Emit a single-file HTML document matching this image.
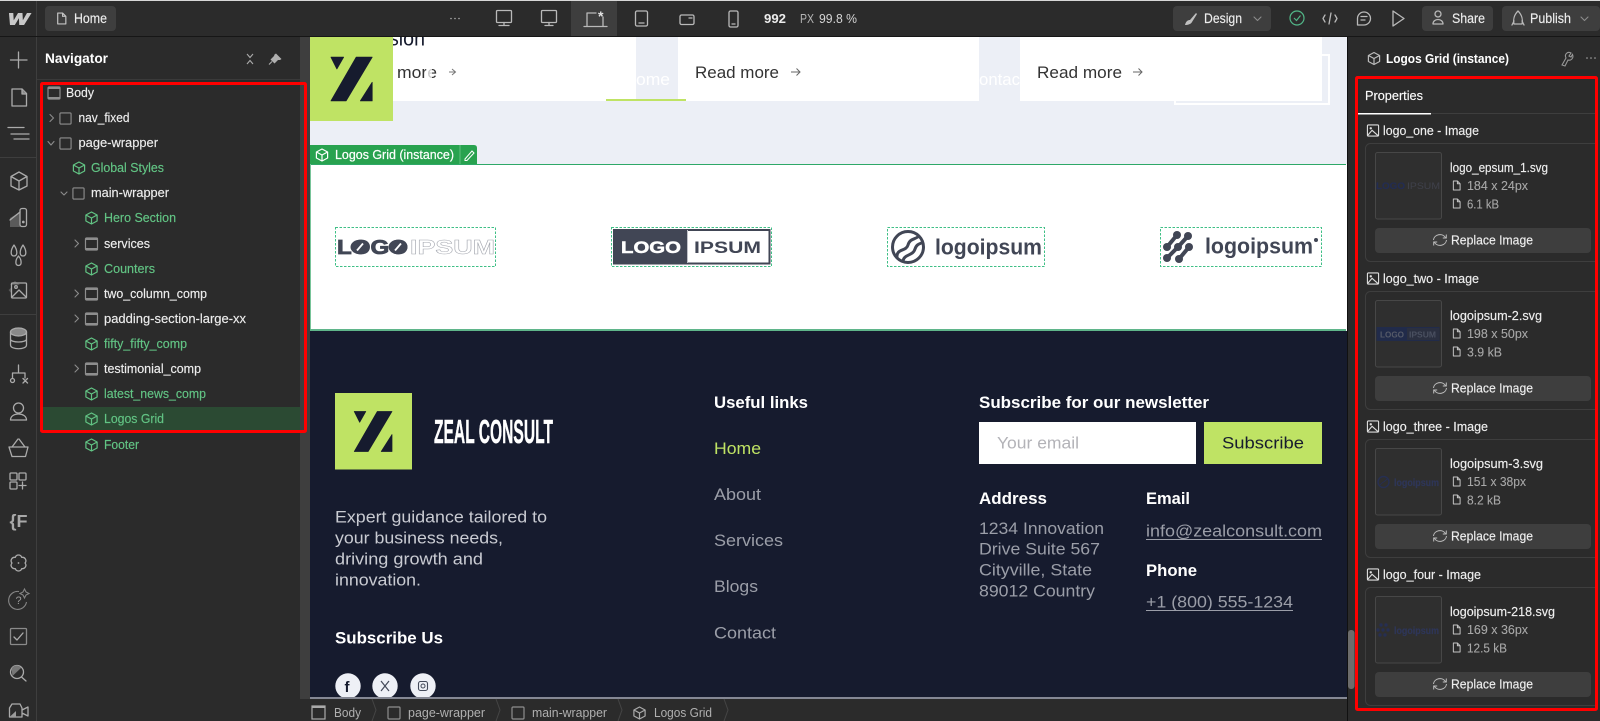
<!DOCTYPE html>
<html lang="en"><head><meta charset="utf-8"><title>Logos Grid</title>
<style>
html,body{margin:0;padding:0;width:1600px;height:721px;overflow:hidden;background:#2b2b2b}
svg{display:block;font-family:"Liberation Sans",sans-serif}
.n{font-size:12.5px;fill:#ededed;stroke:#ededed;stroke-width:.15px}
.g{font-size:12.5px;fill:#62c484;stroke:#62c484;stroke-width:.15px}
.i{fill:none;stroke:#b9b9b9;stroke-width:1.3;stroke-linejoin:round;stroke-linecap:round}
.ch{fill:none;stroke:#8c8c8c;stroke-width:1.1;stroke-linejoin:round;stroke-linecap:round}
.t{font-size:13.5px;fill:#ececec;stroke:#ececec;stroke-width:.15px}
.p{font-size:12.5px;fill:#eee;stroke:#eee;stroke-width:.15px}
.s{font-size:12.5px;fill:#a8a8a8;stroke:#a8a8a8;stroke-width:.1px}
.f{font-size:16.8px;fill:#c9cbd2}
.l{font-size:16.8px;fill:#9b9ea8}
.b{font-size:16.6px;fill:#fff;font-weight:bold}
.c{font-size:12.5px;fill:#b0b0b0}
</style></head><body>
<svg width="1600" height="721" viewBox="0 0 1600 721" xmlns="http://www.w3.org/2000/svg">
<defs>
<symbol id="cube" viewBox="0 0 14 14"><path d="M7 1 L12.6 4 V10 L7 13 L1.4 10 V4Z M1.4 4 L7 7 L12.6 4 M7 7 V13" fill="none" stroke="currentColor" stroke-width="1.2" stroke-linejoin="round"/></symbol>
<symbol id="box" viewBox="0 0 14 14"><rect x="1" y="1" width="12" height="12" rx="1" fill="none" stroke="#8e8e8e" stroke-width="1.2"/></symbol>
<symbol id="sec" viewBox="0 0 14 14"><rect x="1" y="1" width="12" height="12" rx="1" fill="none" stroke="#8e8e8e" stroke-width="1.2"/><rect x="1" y="1" width="12" height="2" fill="#8e8e8e"/><rect x="1" y="11" width="12" height="2" fill="#8e8e8e"/></symbol>
<symbol id="img" viewBox="0 0 14 14"><rect x="1" y="1" width="12" height="12" rx="1" fill="none" stroke="#ddd" stroke-width="1.2"/><circle cx="4.6" cy="4.6" r="1.3" fill="#ddd"/><path d="M1.5 12 L6 6.8 L12.5 12.6" fill="none" stroke="#ddd" stroke-width="1.2"/></symbol>
<symbol id="doc" viewBox="0 0 10 12"><path d="M1.5 1 H6 L9 4 V11 H1.5Z M6 1 V4 H9" fill="none" stroke="#c4c4c4" stroke-width="1.1" stroke-linejoin="round"/></symbol>
<symbol id="z" viewBox="0 0 100 100"><path d="M25 24 H40 L32 38Z M55 24 H74 L43 76 H25Z M74 54 V76 H60Z" fill="#161b2e" stroke="#161b2e" stroke-width="1" stroke-linejoin="round"/></symbol>
<symbol id="rep" viewBox="0 0 16 14"><path d="M1.5 7 A6.500 6 0 0 1 13.500 4.500 M14.500 7 A6.500 6 0 0 1 2.500 9.500 M14.300 1.500 V5 H10.800 M1.700 12.500 V9 H5.200" fill="none" stroke="#bdbdbd" stroke-width="1"/></symbol>
</defs>

<!-- canvas -->
<rect x="310" y="37" width="1037" height="128" fill="#eceff6"/>
<rect x="393" y="37" width="243" height="64" fill="#fff"/>
<rect x="678" y="37" width="301" height="64" fill="#fff"/>
<rect x="1020" y="37" width="302" height="64" fill="#fff"/>
<rect x="1175" y="55" width="154" height="49" fill="none" stroke="#fff" stroke-width="2"/>
<rect x="1020" y="37" width="302" height="64" fill="#fff"/>
<text x="389" y="45.500" font-size="21" fill="#161b2e" textLength="36" lengthAdjust="spacingAndGlyphs">sion</text>
<text x="397" y="78" font-size="16.500" fill="#333" textLength="40" lengthAdjust="spacingAndGlyphs">more</text>
<rect x="426" y="66" width="6" height="14" fill="#fff" opacity=".75"/>
<path d="M449 72 H455 M452 69 L455.500 72 L452 75" fill="none" stroke="#777" stroke-width="1"/>
<text x="636" y="85" font-size="16.500" fill="#fff" textLength="34" lengthAdjust="spacingAndGlyphs">ome</text>
<rect x="606" y="99" width="80" height="2" fill="#bfe364"/>
<text x="695" y="78" font-size="16.500" fill="#333" textLength="84" lengthAdjust="spacingAndGlyphs">Read more</text>
<path d="M791 72 H800 M796.500 68.500 L800 72 L796.500 75.500" fill="none" stroke="#666" stroke-width="1"/>
<text x="979" y="85" font-size="16.500" fill="#fff" textLength="41" lengthAdjust="spacingAndGlyphs">ontac</text>
<text x="1037" y="78" font-size="16.500" fill="#333" textLength="85" lengthAdjust="spacingAndGlyphs">Read more</text>
<path d="M1133 72 H1142 M1138.500 68.500 L1142 72 L1138.500 75.500" fill="none" stroke="#666" stroke-width="1"/>
<rect x="310" y="37" width="83" height="84" fill="#bfe364"/>
<use href="#z" x="310" y="37" width="84" height="84"/>

<!-- logos section -->
<rect x="310" y="164" width="1037" height="167" fill="#fff"/>
<rect x="310" y="164" width="1036" height="1" fill="#2ea868"/>
<rect x="310" y="164" width="1" height="167" fill="#78c499"/>
<rect x="310" y="329" width="1036" height="2" fill="#5fb58a"/>
<path d="M310 145 H474 Q477 145 477 148 V164 H310Z" fill="#28a24f"/>
<use href="#cube" x="315" y="148" width="14" height="14" color="#fff"/>
<text x="335" y="159" font-size="12.500" fill="#fff" stroke="#fff" stroke-width=".2" textLength="119" lengthAdjust="spacingAndGlyphs">Logos Grid (instance)</text>
<rect x="459.500" y="145" width="1" height="19" fill="#5fc07f"/>
<path d="M465 159 L472 151 L474 153 L467 160.500 L465 160.500Z" fill="none" stroke="#fff" stroke-width="1"/>

<g fill="none" stroke="#3fbf86" stroke-width="1" stroke-dasharray="2.500 1.500">
<rect x="335.500" y="227.500" width="160" height="39"/>
<rect x="611.500" y="227.500" width="160" height="39"/>
<rect x="887.500" y="227.500" width="157" height="39"/>
<rect x="1160.500" y="227.500" width="161" height="39"/>
</g>
<!-- logo 1 -->
<text x="337" y="254" font-size="20" font-weight="bold" fill="#414655" stroke="#414655" stroke-width=".8" textLength="71" lengthAdjust="spacingAndGlyphs">LOGO</text>
<ellipse cx="360" cy="247" rx="9.500" ry="7.300" fill="#414655"/><path d="M357 250.500 L363 243.500" stroke="#fff" stroke-width="1.800"/>
<ellipse cx="398" cy="247" rx="9.500" ry="7.300" fill="#414655"/><path d="M395 250.500 L401 243.500" stroke="#fff" stroke-width="1.800"/>
<text x="410" y="254" font-size="20" font-weight="bold" fill="#fff" stroke="#a5a8b0" stroke-width=".5" textLength="85" lengthAdjust="spacingAndGlyphs">IPSUM</text>
<!-- logo 2 -->
<rect x="614" y="230" width="155.500" height="33.500" fill="#fff" stroke="#414655" stroke-width="2"/>
<rect x="614" y="230" width="73" height="33.500" fill="#414655"/>
<rect x="687" y="230" width="1" height="33" fill="#bfc1c8"/>
<text x="621" y="253" font-size="17" font-weight="bold" fill="#fff" stroke="#fff" stroke-width=".5" textLength="60" lengthAdjust="spacingAndGlyphs">LOGO</text>
<text x="694" y="253" font-size="17" font-weight="bold" fill="#414655" textLength="67" lengthAdjust="spacingAndGlyphs">IPSUM</text>
<!-- logo 3 -->
<circle cx="908" cy="247" r="15.500" fill="none" stroke="#414655" stroke-width="3"/>
<path d="M897 258 C896 248 906 252 908 245 C910 238 915 240 919 236 M903 261 C904 254 913 256 915 249 C917 243 921 244 923 242" fill="none" stroke="#414655" stroke-width="3"/>
<text x="935" y="254.500" font-size="22" font-weight="bold" fill="#414655" textLength="107" lengthAdjust="spacingAndGlyphs">logoipsum</text>
<!-- logo 4 -->
<g fill="none" stroke="#414655" stroke-width="4" stroke-linecap="round"><path d="M1177 235 L1167 247 M1188 236 L1178 247 L1167 258 M1189 247 L1179 259"/></g>
<g fill="#414655"><circle cx="1177" cy="235" r="4"/><circle cx="1188" cy="236" r="4"/><circle cx="1167" cy="247" r="4"/><circle cx="1178" cy="247" r="4"/><circle cx="1189" cy="247" r="4"/><circle cx="1167" cy="258" r="4"/><circle cx="1179" cy="259" r="4"/></g>
<text x="1205" y="253.500" font-size="22" font-weight="bold" fill="#414655" textLength="108" lengthAdjust="spacingAndGlyphs">logoipsum</text>
<circle cx="1316" cy="240" r="2" fill="#414655"/>

<!-- footer -->
<rect x="310" y="331" width="1037" height="366" fill="#161b2e"/>
<rect x="335" y="393" width="77" height="76.500" fill="#bfe364"/>
<use href="#z" x="335" y="393" width="77" height="77"/>
<text x="434" y="443" font-size="33" font-weight="bold" fill="#fff" stroke="#fff" stroke-width=".4" textLength="119" lengthAdjust="spacingAndGlyphs">ZEAL CONSULT</text>
<text class="f" x="335" y="522.500" textLength="212" lengthAdjust="spacingAndGlyphs">Expert guidance tailored to</text>
<text class="f" x="335" y="543.500" textLength="168" lengthAdjust="spacingAndGlyphs">your business needs,</text>
<text class="f" x="335" y="564.500" textLength="148" lengthAdjust="spacingAndGlyphs">driving growth and</text>
<text class="f" x="335" y="585.500" textLength="86" lengthAdjust="spacingAndGlyphs">innovation.</text>
<text class="b" x="335" y="643.500" textLength="108" lengthAdjust="spacingAndGlyphs">Subscribe Us</text>
<circle cx="348" cy="686" r="12.700" fill="#eef0f6"/><circle cx="385" cy="686" r="12.700" fill="#eef0f6"/><circle cx="423" cy="686" r="12.700" fill="#eef0f6"/>
<text x="344.500" y="692" font-size="15" font-weight="bold" fill="#161b2e">f</text>
<path d="M381 681 L389 691 M389 681 L381 691" stroke="#444a5a" stroke-width="1.200" fill="none"/>
<rect x="418.500" y="681.500" width="9" height="9" rx="2" fill="none" stroke="#444a5a" stroke-width="1.100"/><circle cx="423" cy="686" r="2" fill="none" stroke="#444a5a"/>

<text class="b" x="714" y="408" textLength="94" lengthAdjust="spacingAndGlyphs">Useful links</text>
<text class="l" x="714" y="454" style="fill:#bfe364" textLength="47" lengthAdjust="spacingAndGlyphs">Home</text>
<text class="l" x="714" y="500" textLength="47" lengthAdjust="spacingAndGlyphs">About</text>
<text class="l" x="714" y="546" textLength="69" lengthAdjust="spacingAndGlyphs">Services</text>
<text class="l" x="714" y="592" textLength="44" lengthAdjust="spacingAndGlyphs">Blogs</text>
<text class="l" x="714" y="638.500" textLength="62" lengthAdjust="spacingAndGlyphs">Contact</text>

<text class="b" x="979" y="408" textLength="230" lengthAdjust="spacingAndGlyphs">Subscribe for our newsletter</text>
<rect x="979" y="422" width="217" height="42" fill="#fff"/>
<text x="997" y="448.500" font-size="16.800" fill="#b3b3b8" textLength="82" lengthAdjust="spacingAndGlyphs">Your email</text>
<rect x="1204" y="422" width="118" height="42" fill="#bfe364"/>
<text x="1222" y="448.500" font-size="16.800" fill="#161b2e" textLength="82" lengthAdjust="spacingAndGlyphs">Subscribe</text>
<text class="b" x="979" y="504" textLength="68" lengthAdjust="spacingAndGlyphs">Address</text>
<text class="b" x="1146" y="504" textLength="44" lengthAdjust="spacingAndGlyphs">Email</text>
<text class="l" x="979" y="534" textLength="125" lengthAdjust="spacingAndGlyphs">1234 Innovation</text>
<text class="l" x="979" y="554.500" textLength="121" lengthAdjust="spacingAndGlyphs">Drive Suite 567</text>
<text class="l" x="979" y="575.500" textLength="113" lengthAdjust="spacingAndGlyphs">Cityville, State</text>
<text class="l" x="979" y="596.500" textLength="116" lengthAdjust="spacingAndGlyphs">89012 Country</text>
<text class="l" x="1146" y="536.500" textLength="176" lengthAdjust="spacingAndGlyphs">info@zealconsult.com</text>
<rect x="1146" y="539" width="176" height="1" fill="#9b9ea8"/>
<text class="b" x="1146" y="576" textLength="51" lengthAdjust="spacingAndGlyphs">Phone</text>
<text class="l" x="1146" y="607.500" textLength="147" lengthAdjust="spacingAndGlyphs">+1 (800) 555-1234</text>
<rect x="1146" y="610" width="147" height="1" fill="#9b9ea8"/>
<rect x="310" y="697" width="1037" height="2" fill="#858894"/>

<!-- top bar -->
<rect x="0" y="0" width="1600" height="37" fill="#2b2b2b"/>
<rect x="0" y="0" width="1600" height="1" fill="#d8d8d8"/>
<rect x="0" y="36" width="1600" height="1" fill="#161616"/>
<rect x="36" y="1" width="1" height="35" fill="#3e3e3e"/>
<text x="8" y="24.500" font-size="16" font-weight="bold" font-style="italic" fill="#c8c8c8" stroke="#c8c8c8" stroke-width=".9" textLength="21" lengthAdjust="spacingAndGlyphs">W</text>
<rect x="45" y="6" width="71" height="25" rx="4" fill="#3e3e3e"/>
<use href="#doc" x="56" y="12" width="11" height="13"/>
<text class="t" x="74" y="23" textLength="33" lengthAdjust="spacingAndGlyphs">Home</text>
<g fill="#b0b0b0"><circle cx="451" cy="18.500" r=".8"/><circle cx="455" cy="18.500" r=".8"/><circle cx="459" cy="18.500" r=".8"/></g>
<rect x="571" y="1" width="46" height="35" fill="#3e3e3e"/>
<g class="i">
<rect x="496.500" y="10.500" width="15" height="12" rx="1"/><path d="M504 22.500 V25 M499 25.500 H509"/>
<rect x="541.500" y="10.500" width="15" height="12" rx="1"/><path d="M549 22.500 V25 M545 25.500 H553"/>
<path d="M587 26 L587 13 H596 M584 26.500 H607 M603 17 V26"/>
<rect x="635.500" y="11" width="12" height="15" rx="1.500"/><path d="M639 23 H644"/>
<rect x="680" y="15" width="14" height="9.500" rx="1.500"/><path d="M689 18 H692"/>
<rect x="729" y="11" width="9" height="16" rx="1.500"/><path d="M732 24 H735"/>
</g>
<text x="598" y="21" font-size="14" font-weight="bold" fill="#e6e6e6">*</text>
<text x="764" y="23" font-size="13" font-weight="bold" fill="#ececec" textLength="22" lengthAdjust="spacingAndGlyphs">992</text>
<text x="800" y="23" font-size="13" fill="#b5b5b5" textLength="14" lengthAdjust="spacingAndGlyphs">PX</text>
<text x="819" y="23" font-size="13" fill="#d5d5d5" textLength="38" lengthAdjust="spacingAndGlyphs">99.8 %</text>

<rect x="1173" y="6" width="98" height="25" rx="4" fill="#3e3e3e"/>
<path d="M1185 25 C1186 21 1188 20 1190 20 L1196 13 L1197 14 L1192 22 C1191 24 1188 25 1185 25Z" fill="#c0c0c0"/>
<text class="t" x="1204" y="23" textLength="38" lengthAdjust="spacingAndGlyphs">Design</text>
<path d="M1254 17 L1257.500 20.500 L1261 17" class="ch"/>
<circle cx="1297" cy="18" r="7" fill="none" stroke="#52b788" stroke-width="1.200"/><path d="M1294 18 L1296.500 20.500 L1300.500 15.500" fill="none" stroke="#52b788" stroke-width="1.100"/>
<path d="M1325 15 L1323 18.500 L1325 22 M1335 15 L1337 18.500 L1335 22 M1331 13 L1329 24" class="i"/>
<path d="M1357.500 25 V18.500 A6.500 6.500 0 1 1 1364 25Z M1361 16.500 H1367 M1361 20 H1365" class="i"/>
<path d="M1393 11 L1404 18.500 L1393 26Z" class="i"/>
<rect x="1422" y="6" width="71" height="25" rx="4" fill="#3e3e3e"/>
<circle cx="1438" cy="14" r="3" class="i"/><path d="M1433 24 C1433 18 1443 18 1443 24Z" class="i"/>
<text class="t" x="1452" y="23" textLength="33" lengthAdjust="spacingAndGlyphs">Share</text>
<rect x="1502" y="6" width="98" height="25" rx="4" fill="#3e3e3e"/>
<path d="M1518 11 C1514 15 1513 20 1514 24 H1522 C1523 20 1522 15 1518 11Z M1512 25 L1514 21 M1524 25 L1522 21" class="i"/>
<text class="t" x="1530" y="23" textLength="41" lengthAdjust="spacingAndGlyphs">Publish</text>
<path d="M1581 17 L1584.500 20.500 L1588 17" class="ch"/>

<!-- left rail -->
<rect x="36" y="37" width="1" height="684" fill="#3e3e3e"/>
<rect x="0" y="157" width="36" height="1" fill="#3e3e3e"/>
<rect x="0" y="314" width="36" height="1" fill="#3e3e3e"/>
<path d="M10 218 L20 212 V227 H10Z" fill="#5a5a5a"/>
<path d="M15 281 L20 285 H10Z M8.500 290 L12 287 V294Z" fill="#555"/>
<g class="i" style="stroke:#ababab">
<path d="M10.500 60 H27 M18.500 52 V68"/>
<path d="M12 89 H22 L26.500 93.500 V106 H12Z"/><path d="M22 89 L22 94 H26.500" fill="#8a8a8a"/>
<path d="M8 127.500 H24 M11 134 H29 M14 139 H29"/>
<path d="M19 172 L27 176.500 V186 L19 190 L11 186 V176.500Z M11 176.500 L19 181 L27 176.500 M19 181 V190"/>
<rect x="20" y="208.500" width="6.500" height="18" rx="2"/><circle cx="23.300" cy="222" r=".7"/>
<path d="M20 212 L10 220"/>
<path d="M14 245 C10.500 250 10 256 14 256 C18 256 17.500 250 14 245Z M23 245 C19.500 250 19 256 23 256 C27 256 26.500 250 23 245Z M18.500 256 C15 260 15 265.500 18.500 265.500 C22 265.500 22 260 18.500 256Z"/>
<rect x="11.500" y="283" width="15" height="15" rx="1"/><circle cx="16" cy="287" r="1.300"/><path d="M12 297 L19 290 L26 297"/>
<ellipse cx="18.500" cy="332" rx="8" ry="4" fill="#8a8a8a"/><path d="M10.500 332 V345 C10.500 350 26.500 350 26.500 345 V332 M10.500 339 C10.500 343 26.500 343 26.500 339"/>
<path d="M18.500 365 V372 M12.500 378 V373 H25 V378"/><circle cx="12.500" cy="380.500" r="2"/><path d="M23 378.500 L27.500 383 M27.500 378.500 L23 383"/>
<circle cx="18.500" cy="408" r="5"/><path d="M10.500 420 C10.500 412 26.500 412 26.500 420 Z"/>
<path d="M9 447 H28 L25.500 456.500 H12 Z M12 447 L18 439 M25 447 L19 439"/>
<rect x="10" y="473" width="7" height="7" rx="1"/><rect x="19" y="473" width="7" height="7" rx="1"/><rect x="10" y="482" width="7" height="7" rx="1"/><path d="M19 485.500 H26 M22.500 482 V489"/>
<path d="M25 563 A3.400 3.400 0 0 1 21.750 568.600 A3.400 3.400 0 0 1 15.250 568.600 A3.400 3.400 0 0 1 12 563 A3.400 3.400 0 0 1 15.250 557.400 A3.400 3.400 0 0 1 21.750 557.400 A3.400 3.400 0 0 1 25 563Z"/>
<rect x="10.500" y="628.500" width="16" height="16" rx="1" style="stroke:#8a8a8a"/><path d="M14 637 L17 640 L23 633"/>
<circle cx="17" cy="672" r="6.500"/><path d="M21.500 677 L26 681"/>
<path d="M9.500 717 V708 L12 704 H20 L22 708 V717Z M22 710 L28 707 V716 L22 713"/>
</g>
<circle cx="18.500" cy="563" r=".9" fill="#ababab"/>
<g fill="none" stroke="#858585" stroke-width="1.100"><path d="M26.500 602 A9 9 0 1 1 19 591.500"/><path d="M24.500 589 L26 592 L29 593.500 L26 595 L24.500 598 L23 595 L20 593.500 L23 592Z"/></g>
<path d="M12.500 676 L21 668 C19 664 13 665 11.500 669Z" fill="#777"/>
<path d="M9.500 717 L16 711 V717Z" fill="#9a9a9a"/>
<text x="9.500" y="527" font-size="17.500" font-weight="bold" fill="#a8a8a8" textLength="18" lengthAdjust="spacingAndGlyphs">{F</text>
<text x="15.500" y="604" font-size="11" fill="#9a9a9a">?</text>

<!-- navigator -->
<rect x="300" y="37" width="10" height="662" fill="#3e3e3e"/>
<rect x="301" y="699" width="1046" height="22" fill="#2b2b2b"/>
<rect x="37" y="79" width="263" height="1" fill="#3a3a3a"/>
<text x="45" y="63" font-size="13.500" font-weight="bold" fill="#fff" textLength="63" lengthAdjust="spacingAndGlyphs">Navigator</text>
<path d="M247 54 L250 57.500 L253 54 M247 64 L250 60.500 L253 64" fill="none" stroke="#aaa" stroke-width="1.100"/>
<path d="M276 53.500 L281.500 59 L280 60 L278 60 L274.500 63.500 L270.500 59.500 L274 56 L274.500 54.500Z" fill="#b0b0b0"/><path d="M272 61.500 L269 64.500" stroke="#b0b0b0" stroke-width="1.100"/>
<rect x="40" y="407" width="260" height="24.500" fill="#2b4a33"/>

<use href="#sec" x="47" y="86" width="14" height="14"/>
<text class="n" x="66" y="97" textLength="28" lengthAdjust="spacingAndGlyphs">Body</text>
<path d="M50 114.500 L53.500 118 L50 121.500" class="ch"/>
<use href="#box" x="59" y="112" width="13" height="13"/>
<text class="n" x="78.500" y="122" textLength="51" lengthAdjust="spacingAndGlyphs">nav_fixed</text>
<path d="M48 141.500 L51 145 L54 141.500" class="ch"/>
<use href="#box" x="59" y="137" width="13" height="13"/>
<text class="n" x="78.500" y="147" textLength="79.500" lengthAdjust="spacingAndGlyphs">page-wrapper</text>
<use href="#cube" x="72" y="161" width="14" height="14" color="#62c484"/>
<text class="g" x="91" y="172" textLength="73" lengthAdjust="spacingAndGlyphs">Global Styles</text>
<path d="M61 192 L64 195 L67 192" class="ch"/>
<use href="#box" x="72" y="187" width="13" height="13"/>
<text class="n" x="91" y="197" textLength="78" lengthAdjust="spacingAndGlyphs">main-wrapper</text>
<use href="#cube" x="84.500" y="211" width="14" height="14" color="#62c484"/>
<text class="g" x="104" y="222" textLength="72" lengthAdjust="spacingAndGlyphs">Hero Section</text>
<path d="M75 240 L78.500 243.500 L75 247" class="ch"/>
<use href="#sec" x="84.500" y="237" width="14" height="14"/>
<text class="n" x="104" y="248" textLength="46" lengthAdjust="spacingAndGlyphs">services</text>
<use href="#cube" x="84.500" y="262" width="14" height="14" color="#62c484"/>
<text class="g" x="104" y="273" textLength="51" lengthAdjust="spacingAndGlyphs">Counters</text>
<path d="M75 290 L78.500 293.500 L75 297" class="ch"/>
<use href="#sec" x="84.500" y="287" width="14" height="14"/>
<text class="n" x="104" y="298" textLength="103" lengthAdjust="spacingAndGlyphs">two_column_comp</text>
<path d="M75 315 L78.500 318.500 L75 322" class="ch"/>
<use href="#sec" x="84.500" y="312" width="14" height="14"/>
<text class="n" x="104" y="323" textLength="142" lengthAdjust="spacingAndGlyphs">padding-section-large-xx</text>
<use href="#cube" x="84.500" y="337" width="14" height="14" color="#62c484"/>
<text class="g" x="104" y="348" textLength="83" lengthAdjust="spacingAndGlyphs">fifty_fifty_comp</text>
<path d="M75 365 L78.500 368.500 L75 372" class="ch"/>
<use href="#sec" x="84.500" y="362" width="14" height="14"/>
<text class="n" x="104" y="373" textLength="97" lengthAdjust="spacingAndGlyphs">testimonial_comp</text>
<use href="#cube" x="84.500" y="387" width="14" height="14" color="#62c484"/>
<text class="g" x="104" y="398" textLength="102" lengthAdjust="spacingAndGlyphs">latest_news_comp</text>
<use href="#cube" x="84.500" y="412" width="14" height="14" color="#62c484"/>
<text class="g" x="104" y="423" textLength="60" lengthAdjust="spacingAndGlyphs">Logos Grid</text>
<use href="#cube" x="84.500" y="438" width="14" height="14" color="#62c484"/>
<text class="g" x="104" y="449" textLength="35" lengthAdjust="spacingAndGlyphs">Footer</text>
<rect x="41.500" y="83.500" width="264" height="348" rx="1" fill="none" stroke="#f00" stroke-width="3"/>

<!-- breadcrumb -->
<rect x="312" y="706" width="13" height="13" fill="none" stroke="#aaa" stroke-width="1.200"/><rect x="312" y="706" width="13" height="2" fill="#aaa"/>
<text class="c" x="334" y="717" textLength="27" lengthAdjust="spacingAndGlyphs">Body</text>
<use href="#box" x="387" y="706" width="14" height="14"/>
<text class="c" x="408" y="717" textLength="77" lengthAdjust="spacingAndGlyphs">page-wrapper</text>
<use href="#box" x="511" y="706" width="14" height="14"/>
<text class="c" x="532" y="717" textLength="75" lengthAdjust="spacingAndGlyphs">main-wrapper</text>
<use href="#cube" x="632.500" y="706" width="14" height="14" color="#aaa"/>
<text class="c" x="654" y="717" textLength="58" lengthAdjust="spacingAndGlyphs">Logos Grid</text>
<path d="M372 699 L376 710 L372 721 M496 699 L500 710 L496 721 M618 699 L622 710 L618 721 M724 699 L728 710 L724 721" fill="none" stroke="#454545" stroke-width="1"/>

<!-- right panel -->
<rect x="1347" y="37" width="253" height="684" fill="#2b2b2b"/>
<rect x="1347" y="37" width="1" height="684" fill="#111"/>
<rect x="1348" y="630" width="6.500" height="59" rx="3" fill="#6c6c6c"/>
<use href="#cube" x="1367" y="51" width="14" height="15" color="#bbb"/>
<text x="1386" y="63" font-size="12.500" font-weight="bold" fill="#fff" textLength="123" lengthAdjust="spacingAndGlyphs">Logos Grid (instance)</text>
<path d="M1562 65 L1566 58 C1564 54 1568 51 1571 53 L1569 56 L1571 57 L1572.500 54.500 C1574 58 1571 61 1568 60 L1565 66Z" fill="none" stroke="#999" stroke-width="1.100"/>
<g fill="#aaa"><circle cx="1587" cy="58" r=".8"/><circle cx="1591" cy="58" r=".8"/><circle cx="1595" cy="58" r=".8"/></g>
<text class="p" x="1365" y="100" style="fill:#fff" textLength="58" lengthAdjust="spacingAndGlyphs">Properties</text>
<rect x="1357" y="113" width="240" height="1" fill="#3e3e3e"/>
<rect x="1358" y="113" width="73" height="1.500" fill="#fff"/>

<g>
<use href="#img" x="1366.500" y="124" width="13" height="13"/>
<text class="p" x="1383" y="135" textLength="96" lengthAdjust="spacingAndGlyphs">logo_one - Image</text>
<rect x="1365.500" y="143.500" width="240" height="118" rx="5" fill="none" stroke="#3e3e3e"/>
<rect x="1375.500" y="152.500" width="66" height="66.500" rx="2" fill="#2f2f2f" stroke="#474747"/>
<text x="1376" y="189" font-size="9.500" font-weight="bold" fill="#232d52" stroke="#232d52" stroke-width=".2" textLength="29" lengthAdjust="spacingAndGlyphs">LOGO</text>
<text x="1407" y="189" font-size="9.500" fill="#3f414b" textLength="33" lengthAdjust="spacingAndGlyphs">IPSUM</text>
<text class="p" x="1450" y="172" textLength="98" lengthAdjust="spacingAndGlyphs">logo_epsum_1.svg</text>
<use href="#doc" x="1452" y="180" width="9" height="11"/>
<text class="s" x="1467" y="190" textLength="61" lengthAdjust="spacingAndGlyphs">184 x 24px</text>
<use href="#doc" x="1452" y="198" width="9" height="11"/>
<text class="s" x="1467" y="208.500" textLength="32" lengthAdjust="spacingAndGlyphs">6.1 kB</text>
<rect x="1375" y="228" width="216" height="25" rx="4" fill="#3e3e3e"/>
<use href="#rep" x="1432" y="233" width="16" height="14"/>
<text class="p" x="1451" y="244.500" textLength="82" lengthAdjust="spacingAndGlyphs">Replace Image</text>
</g>
<g transform="translate(0,148)">
<use href="#img" x="1366.500" y="124" width="13" height="13"/>
<text class="p" x="1383" y="135" textLength="96" lengthAdjust="spacingAndGlyphs">logo_two - Image</text>
<rect x="1365.500" y="143.500" width="240" height="118" rx="5" fill="none" stroke="#3e3e3e"/>
<rect x="1375.500" y="152.500" width="66" height="66.500" rx="2" fill="#2f2f2f" stroke="#474747"/>
<rect x="1376.500" y="179" width="63" height="14" fill="#1e2a4f" opacity=".85"/>
<rect x="1407" y="180" width="32" height="12" fill="#2b3040"/>
<text x="1380" y="189.500" font-size="8.500" font-weight="bold" fill="#555a68" textLength="24" lengthAdjust="spacingAndGlyphs">LOGO</text>
<text x="1409" y="189.500" font-size="8.500" font-weight="bold" fill="#4a5060" textLength="27" lengthAdjust="spacingAndGlyphs">IPSUM</text>
<text class="p" x="1450" y="172" textLength="92" lengthAdjust="spacingAndGlyphs">logoipsum-2.svg</text>
<use href="#doc" x="1452" y="180" width="9" height="11"/>
<text class="s" x="1467" y="190" textLength="61" lengthAdjust="spacingAndGlyphs">198 x 50px</text>
<use href="#doc" x="1452" y="198" width="9" height="11"/>
<text class="s" x="1467" y="208.500" textLength="35" lengthAdjust="spacingAndGlyphs">3.9 kB</text>
<rect x="1375" y="228" width="216" height="25" rx="4" fill="#3e3e3e"/>
<use href="#rep" x="1432" y="233" width="16" height="14"/>
<text class="p" x="1451" y="244.500" textLength="82" lengthAdjust="spacingAndGlyphs">Replace Image</text>
</g>
<g transform="translate(0,296)">
<use href="#img" x="1366.500" y="124" width="13" height="13"/>
<text class="p" x="1383" y="135" textLength="105" lengthAdjust="spacingAndGlyphs">logo_three - Image</text>
<rect x="1365.500" y="143.500" width="240" height="118" rx="5" fill="none" stroke="#3e3e3e"/>
<rect x="1375.500" y="152.500" width="66" height="66.500" rx="2" fill="#2f2f2f" stroke="#474747"/>
<circle cx="1383.500" cy="186" r="5.500" fill="none" stroke="#262f52" stroke-width="1.400"/><path d="M1380 189 C1382 186 1385 186 1387 183" stroke="#262f52" fill="none"/>
<text x="1394" y="190" font-size="10" font-weight="bold" fill="#2e3658" stroke="#2e3658" stroke-width=".2" textLength="45" lengthAdjust="spacingAndGlyphs">logoipsum</text>
<text class="p" x="1450" y="172" textLength="93" lengthAdjust="spacingAndGlyphs">logoipsum-3.svg</text>
<use href="#doc" x="1452" y="180" width="9" height="11"/>
<text class="s" x="1467" y="190" textLength="59" lengthAdjust="spacingAndGlyphs">151 x 38px</text>
<use href="#doc" x="1452" y="198" width="9" height="11"/>
<text class="s" x="1467" y="208.500" textLength="34" lengthAdjust="spacingAndGlyphs">8.2 kB</text>
<rect x="1375" y="228" width="216" height="25" rx="4" fill="#3e3e3e"/>
<use href="#rep" x="1432" y="233" width="16" height="14"/>
<text class="p" x="1451" y="244.500" textLength="82" lengthAdjust="spacingAndGlyphs">Replace Image</text>
</g>
<g transform="translate(0,444)">
<use href="#img" x="1366.500" y="124" width="13" height="13"/>
<text class="p" x="1383" y="135" textLength="98" lengthAdjust="spacingAndGlyphs">logo_four - Image</text>
<rect x="1365.500" y="143.500" width="240" height="118" rx="5" fill="none" stroke="#3e3e3e"/>
<rect x="1375.500" y="152.500" width="66" height="66.500" rx="2" fill="#2f2f2f" stroke="#474747"/>
<g fill="#262f52"><circle cx="1381" cy="181" r="1.700"/><circle cx="1386" cy="181" r="1.700"/><circle cx="1378" cy="186" r="1.700"/><circle cx="1383" cy="186" r="1.700"/><circle cx="1388" cy="186" r="1.700"/><circle cx="1380" cy="191" r="1.700"/><circle cx="1385" cy="191" r="1.700"/></g>
<text x="1394" y="190" font-size="10" font-weight="bold" fill="#2e3658" stroke="#2e3658" stroke-width=".2" textLength="45" lengthAdjust="spacingAndGlyphs">logoipsum</text>
<text class="p" x="1450" y="172" textLength="105" lengthAdjust="spacingAndGlyphs">logoipsum-218.svg</text>
<use href="#doc" x="1452" y="180" width="9" height="11"/>
<text class="s" x="1467" y="190" textLength="61" lengthAdjust="spacingAndGlyphs">169 x 36px</text>
<use href="#doc" x="1452" y="198" width="9" height="11"/>
<text class="s" x="1467" y="208.500" textLength="40" lengthAdjust="spacingAndGlyphs">12.5 kB</text>
<rect x="1375" y="228" width="216" height="25" rx="4" fill="#3e3e3e"/>
<use href="#rep" x="1432" y="233" width="16" height="14"/>
<text class="p" x="1451" y="244.500" textLength="82" lengthAdjust="spacingAndGlyphs">Replace Image</text>
</g>
<rect x="1597" y="77" width="3" height="633" fill="#2b2b2b"/>
<rect x="1356.500" y="77.500" width="240" height="632" rx="1" fill="none" stroke="#f00" stroke-width="3"/>
</svg>
</body></html>
